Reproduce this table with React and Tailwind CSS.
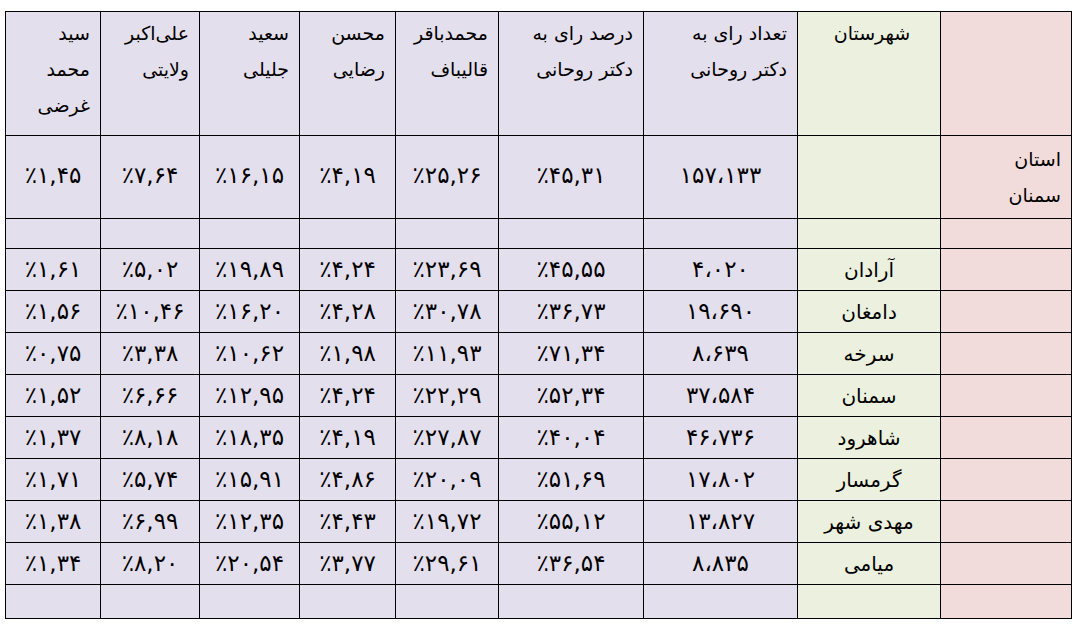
import React from 'react';

const rows = [
  ['آرادان', '۴،۰۲۰', '٪۴۵,۵۵', '٪۲۳,۶۹', '٪۴,۲۴', '٪۱۹,۸۹', '٪۵,۰۲', '٪۱,۶۱'],
  ['دامغان', '۱۹،۶۹۰', '٪۳۶,۷۳', '٪۳۰,۷۸', '٪۴,۲۸', '٪۱۶,۲۰', '٪۱۰,۴۶', '٪۱,۵۶'],
  ['سرخه', '۸،۶۳۹', '٪۷۱,۳۴', '٪۱۱,۹۳', '٪۱,۹۸', '٪۱۰,۶۲', '٪۳,۳۸', '٪۰,۷۵'],
  ['سمنان', '۳۷،۵۸۴', '٪۵۲,۳۴', '٪۲۲,۲۹', '٪۴,۲۴', '٪۱۲,۹۵', '٪۶,۶۶', '٪۱,۵۲'],
  ['شاهرود', '۴۶،۷۳۶', '٪۴۰,۰۴', '٪۲۷,۸۷', '٪۴,۱۹', '٪۱۸,۳۵', '٪۸,۱۸', '٪۱,۳۷'],
  ['گرمسار', '۱۷،۸۰۲', '٪۵۱,۶۹', '٪۲۰,۰۹', '٪۴,۸۶', '٪۱۵,۹۱', '٪۵,۷۴', '٪۱,۷۱'],
  ['مهدی شهر', '۱۳،۸۲۷', '٪۵۵,۱۲', '٪۱۹,۷۲', '٪۴,۴۳', '٪۱۲,۳۵', '٪۶,۹۹', '٪۱,۳۸'],
  ['میامی', '۸،۸۳۵', '٪۳۶,۵۴', '٪۲۹,۶۱', '٪۳,۷۷', '٪۲۰,۵۴', '٪۸,۲۰', '٪۱,۳۴'],
];

const headers = [
  ['تعداد رای به', 'دکتر روحانی'],
  ['درصد رای به', 'دکتر روحانی'],
  ['محمدباقر', 'قالیباف'],
  ['محسن', 'رضایی'],
  ['سعید', 'جلیلی'],
  ['علی‌اکبر', 'ولایتی'],
  ['سید', 'محمد', 'غرضی'],
];

const cell = 'border-[1.5px] border-black p-0';
const pink = 'bg-[#f2dcdb]';
const green = 'bg-[#ebf1de]';
const lav = 'bg-[#e4dfec]';
const num = 'text-[23px] text-center align-middle';

export default function App() {
  return (
    <div className="min-h-[634px] w-[1080px] bg-white pl-[5px] pt-[11px]">
      <table
        dir="rtl"
        className="w-[1066px] table-fixed border-collapse text-[19px] text-black"
        style={{ fontFamily: '"DejaVu Sans", "Noto Sans", sans-serif' }}
      >
        <colgroup>
          <col className="w-[131px]" />
          <col className="w-[143px]" />
          <col className="w-[154px]" />
          <col className="w-[145px]" />
          <col className="w-[103px]" />
          <col className="w-[96px]" />
          <col className="w-[100px]" />
          <col className="w-[99px]" />
          <col className="w-[95px]" />
        </colgroup>
        <tbody>
          <tr className="h-[124px]">
            <td className={`${cell} ${pink}`}></td>
            <td className={`${cell} ${green} align-top text-center`}>
              <div className="pt-[3px] pl-[6px] leading-[36px]">شهرستان</div>
            </td>
            {headers.map((h, i) => (
              <td key={i} className={`${cell} ${lav} align-top text-right`}>
                <div className="pt-[3px] pr-[10px] leading-[36px]">
                  {h.map((l, j) => (
                    <div key={j}>{l}</div>
                  ))}
                </div>
              </td>
            ))}
          </tr>
          <tr className="h-[83px]">
            <td className={`${cell} ${pink} text-right align-middle`}>
              <div className="pr-[10px] leading-[36px]">
                <div>استان</div>
                <div>سمنان</div>
              </div>
            </td>
            <td className={`${cell} ${green}`}></td>
            {['۱۵۷،۱۳۳', '٪۴۵,۳۱', '٪۲۵,۲۶', '٪۴,۱۹', '٪۱۶,۱۵', '٪۷,۶۴', '٪۱,۴۵'].map((v, i) => (
              <td key={i} className={`${cell} ${lav} ${num}`}>
                <div className="-mt-[4px]">{v}</div>
              </td>
            ))}
          </tr>
          <tr className="h-[30px]">
            <td className={`${cell} ${pink}`}></td>
            <td className={`${cell} ${green}`}></td>
            {headers.map((_, i) => (
              <td key={i} className={`${cell} ${lav}`}></td>
            ))}
          </tr>
          {rows.map((r, i) => (
            <tr key={i} className="h-[42px]">
              <td className={`${cell} ${pink}`}></td>
              <td className={`${cell} ${green} text-[20px] text-center align-middle`}>{r[0]}</td>
              {r.slice(1).map((v, j) => (
                <td key={j} className={`${cell} ${lav} ${num}`}>
                  {v}
                </td>
              ))}
            </tr>
          ))}
          <tr className="h-[34px]">
            <td className={`${cell} ${pink}`}></td>
            <td className={`${cell} ${green}`}></td>
            {headers.map((_, i) => (
              <td key={i} className={`${cell} ${lav}`}></td>
            ))}
          </tr>
        </tbody>
      </table>
    </div>
  );
}
